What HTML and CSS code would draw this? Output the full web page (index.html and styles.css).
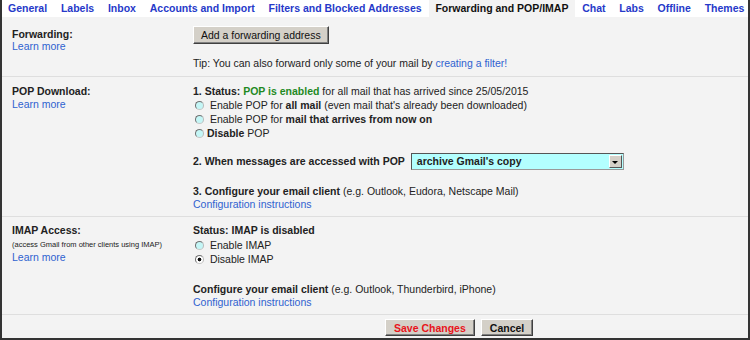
FILE: index.html
```html
<!DOCTYPE html>
<html lang="en">
<head>
    <meta charset="UTF-8">
    <title>Settings - Forwarding and POP/IMAP</title>
    <link rel="stylesheet" href="styles.css">
</head>
<body>
    <div class="frame">
        <div class="tabs">
            <a class="tab" href="#">General</a>
            <a class="tab" href="#">Labels</a>
            <a class="tab" href="#">Inbox</a>
            <a class="tab" href="#">Accounts and Import</a>
            <a class="tab" href="#">Filters and Blocked Addresses</a>
            <span class="tab active">Forwarding and POP/IMAP</span>
            <a class="tab" href="#">Chat</a>
            <a class="tab" href="#">Labs</a>
            <a class="tab" href="#">Offline</a>
            <a class="tab" href="#">Themes</a>
        </div>

        <div class="row row-forward">
            <div class="label">
                <div class="title">Forwarding:</div>
                <a class="link" href="#">Learn more</a>
            </div>
            <div class="value">
                <button class="btn">Add a forwarding address</button>
                <div class="tip">Tip: You can also forward only some of your mail by <a class="link" href="#">creating a filter!</a></div>
            </div>
        </div>

        <div class="row row-pop">
            <div class="label">
                <div class="title">POP Download:</div>
                <a class="link" href="#">Learn more</a>
            </div>
            <div class="value">
                <div class="line"><b>1. Status: <span class="ok">POP is enabled</span></b> for all mail that has arrived since 25/05/2015</div>
                <label class="opt"><input type="radio" class="radio" name="pop"> Enable POP for <b>all mail</b> (even mail that's already been downloaded)</label>
                <label class="opt"><input type="radio" class="radio" name="pop"> Enable POP for <b>mail that arrives from now on</b></label>
                <label class="opt"><input type="radio" class="radio" name="pop"> <b>Disable</b> POP</label>

                <div class="step2">
                    <b>2. When messages are accessed with POP</b>
                    <div class="select">
                        <span class="select-text">archive Gmail's copy</span>
                        <span class="select-arrow"></span>
                    </div>
                </div>

                <div class="step3"><b>3. Configure your email client</b> (e.g. Outlook, Eudora, Netscape Mail)</div>
                <a class="link" href="#">Configuration instructions</a>
            </div>
        </div>

        <div class="row row-imap">
            <div class="label">
                <div class="title">IMAP Access:</div>
                <div class="note">(access Gmail from other clients using IMAP)</div>
                <a class="link" href="#">Learn more</a>
            </div>
            <div class="value">
                <div class="line"><b>Status: IMAP is disabled</b></div>
                <label class="opt"><input type="radio" class="radio" name="imap"> Enable IMAP</label>
                <label class="opt"><input type="radio" class="radio" name="imap" checked> Disable IMAP</label>

                <div class="step3 imap-client"><b>Configure your email client</b> (e.g. Outlook, Thunderbird, iPhone)</div>
                <a class="link" href="#">Configuration instructions</a>
            </div>
        </div>

        <div class="actions">
            <button class="btn btn-bold save">Save Changes</button>
            <button class="btn btn-bold">Cancel</button>
        </div>
    </div>
</body>
</html>
```

FILE: styles.css
```css
body {
    margin: 0;
    font-family: "Liberation Sans", Arial, sans-serif;
    font-size: 10.5px;
    color: #222;
}

.frame {
    width: 746px;
    height: 338px;
    background-color: #f3f3f3;
    border-left: 2px solid #333;
    border-right: 2px solid #333;
    border-bottom: 2px solid #333;
    overflow: hidden;
}

.tabs {
    display: flex;
    height: 17px;
    background-color: #fff;
}

.tab {
    padding: 0 6.9px;
    font-size: 10.5px;
    font-weight: bold;
    line-height: 17px;
    color: #2639c9;
    text-decoration: none;
    white-space: nowrap;
}

.tab:first-child {
    padding-left: 6px;
}

.tab.active {
    background-color: #f3f3f3;
    color: #111;
}

.link {
    color: #2f62d0;
    text-decoration: none;
}

.row {
    display: grid;
    grid-template-columns: 181px 1fr;
    padding-left: 10px;
    border-bottom: 1px solid #dedede;
    line-height: 13px;
}

.label .title {
    font-weight: bold;
}

.label .link,
.label .note {
    display: block;
}

.row-forward {
    padding-top: 9px;
    padding-bottom: 6px;
}

.row-forward .label {
    padding-top: 2px;
}

.row-forward .title {
    line-height: 12px;
}

.tip {
    margin-top: 13px;
}

.row-pop {
    padding-top: 8px;
    padding-bottom: 5px;
}

.row-pop .label .link {
    line-height: 12px;
}

.ok {
    color: #1f8a1f;
}

.opt {
    display: flex;
    align-items: center;
    line-height: 14px;
    white-space: pre;
}

.radio {
    appearance: none;
    -webkit-appearance: none;
    width: 9px;
    height: 9px;
    margin: 0 3px 0 2px;
    border-radius: 50%;
    border: 1px solid #707070;
    border-right-color: #b8b8b8;
    border-bottom-color: #c8c8c8;
    background-color: #c4f6f6;
    box-sizing: border-box;
}

.radio:checked {
    background: radial-gradient(circle, #111 0 1.6px, #fff 2.2px);
}

.step2 {
    display: flex;
    align-items: center;
    margin-top: 13px;
    height: 17px;
}

.select {
    display: flex;
    width: 213px;
    height: 17px;
    margin-left: 6px;
    box-sizing: border-box;
    border: 1px solid #555;
    border-right-color: #999;
    border-bottom-color: #999;
    background-color: #b3ffff;
}

.select-text {
    flex: 1;
    padding-left: 5px;
    font-weight: bold;
    line-height: 15px;
}

.select-arrow {
    width: 13px;
    height: 13px;
    margin: 1px;
    box-sizing: border-box;
    background-color: #d4d0c8;
    border: 1px solid #fff;
    border-right-color: #555;
    border-bottom-color: #555;
    display: flex;
    align-items: center;
    justify-content: center;
}

.select-arrow::after {
    content: "";
    border-left: 3px solid transparent;
    border-right: 3px solid transparent;
    border-top: 3px solid #000;
    margin-top: 1px;
}

.step3 {
    margin-top: 15px;
}

.step3 + .link {
    display: block;
    line-height: 13px;
}

.row-imap {
    padding-top: 7px;
    padding-bottom: 6px;
}

.row-imap .line {
    margin-bottom: 1px;
}

.row-imap .note {
    font-size: 7.5px;
    line-height: 13px;
    margin-top: 1px;
}

.row-imap .label .link {
    line-height: 12px;
}

.imap-client {
    margin-top: 17px;
}

.imap-client + .link {
    line-height: 12px;
}

.btn {
    height: 18px;
    padding: 0 7px;
    font-family: inherit;
    font-size: 10.5px;
    color: #111;
    background-color: #d4d0c8;
    border: 1px solid #fff;
    border-right-color: #404040;
    border-bottom-color: #404040;
    box-shadow: inset -1px -1px 0 #808080;
    border-radius: 0;
    cursor: pointer;
}

.btn-bold {
    font-weight: bold;
    padding: 0 8px;
}

.save {
    color: #e8141b;
}

.actions {
    display: flex;
    gap: 6px;
    padding: 4px 0 0 383px;
}

.actions .btn {
    height: 17px;
}
```
